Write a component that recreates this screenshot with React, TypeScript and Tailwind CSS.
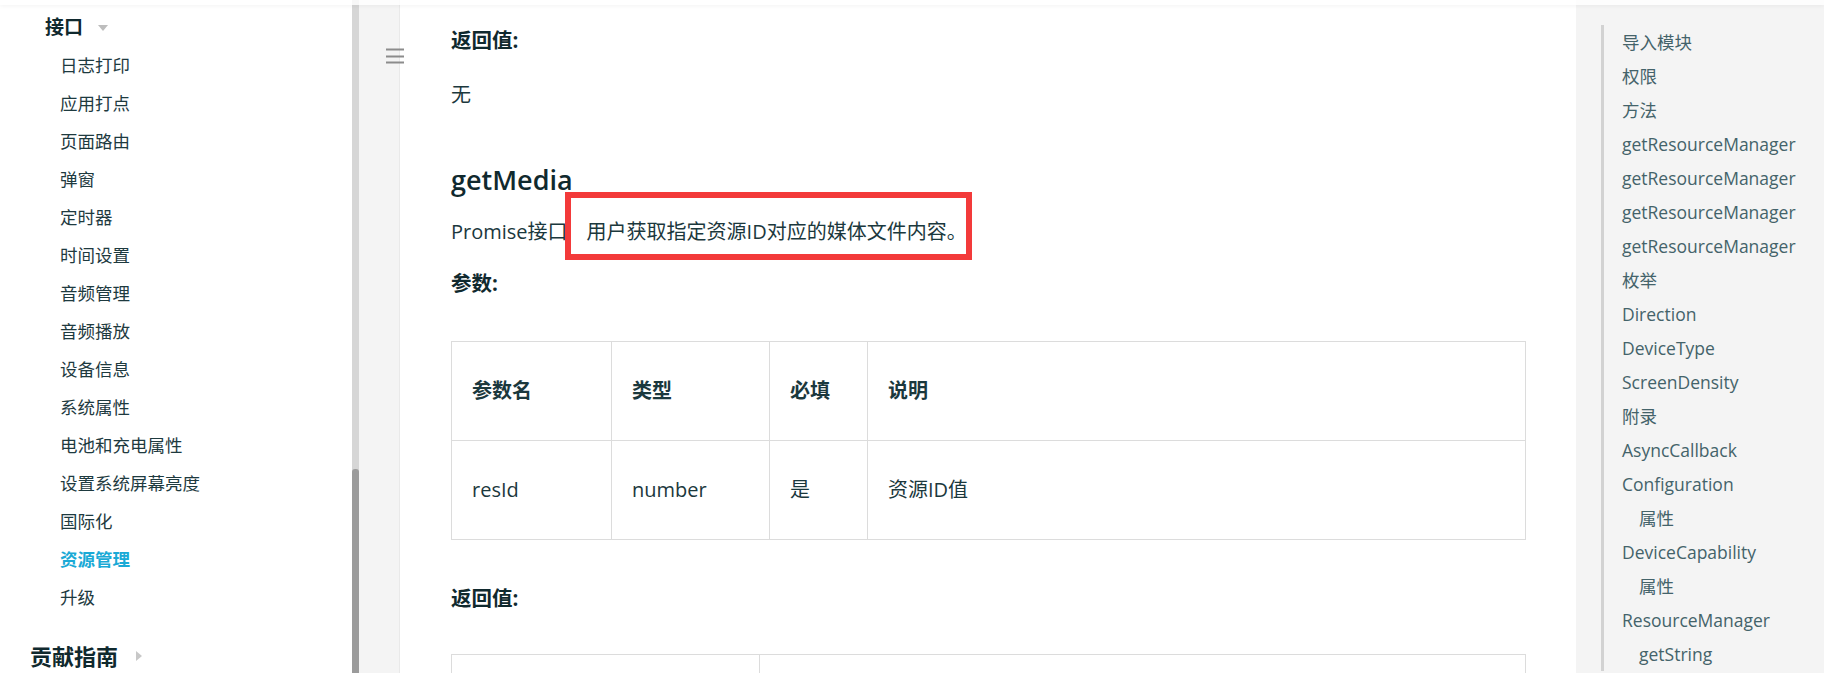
import React from 'react';

const FONT = '"Open Sans", "Noto Sans CJK SC", sans-serif';

const navItems = [
  '日志打印',
  '应用打点',
  '页面路由',
  '弹窗',
  '定时器',
  '时间设置',
  '音频管理',
  '音频播放',
  '设备信息',
  '系统属性',
  '电池和充电属性',
  '设置系统屏幕亮度',
  '国际化',
  '资源管理',
  '升级',
];

const tocItems: { label: string; indent?: boolean }[] = [
  { label: '导入模块' },
  { label: '权限' },
  { label: '方法' },
  { label: 'getResourceManager' },
  { label: 'getResourceManager' },
  { label: 'getResourceManager' },
  { label: 'getResourceManager' },
  { label: '枚举' },
  { label: 'Direction' },
  { label: 'DeviceType' },
  { label: 'ScreenDensity' },
  { label: '附录' },
  { label: 'AsyncCallback' },
  { label: 'Configuration' },
  { label: '属性', indent: true },
  { label: 'DeviceCapability' },
  { label: '属性', indent: true },
  { label: 'ResourceManager' },
  { label: 'getString', indent: true },
];

const Sidebar: React.FC = () => (
  <aside className="w-[352px] shrink-0 bg-white overflow-hidden text-[#1e3a3f]">
    <div className="mt-[8px] h-[38px] pl-[45px] flex items-center">
      <span className="text-[19px] font-bold text-[#10292e]">接口</span>
      <svg width="10" height="6" viewBox="0 0 10 6" className="ml-[15px] mt-[1px]">
        <polygon points="0,0 10,0 5,6" fill="#bdbdbd" />
      </svg>
    </div>
    <ul>
      {navItems.map((item) => (
        <li
          key={item}
          className={`h-[38px] pl-[60px] flex items-center text-[17.5px] ${
            item === '资源管理' ? 'font-bold text-[#1aaad6]' : ''
          }`}
        >
          {item}
        </li>
      ))}
    </ul>
    <div className="mt-[21px] h-[38px] pl-[30px] flex items-center">
      <span className="text-[22px] font-bold text-[#10292e]">贡献指南</span>
      <svg width="6" height="10" viewBox="0 0 6 10" className="ml-[18px]">
        <polygon points="0,0 6,5 0,10" fill="#c8c8c8" />
      </svg>
    </div>
  </aside>
);

const Scrollbar: React.FC = () => (
  <div className="w-[7px] shrink-0 bg-[#d6d6d6] flex flex-col">
    <div className="mt-[469px] flex-1 bg-[#9b9b9b] rounded-t-[3px]" />
  </div>
);

const Gutter: React.FC = () => (
  <div className="w-[41px] shrink-0 bg-[#f4f4f4] border-r border-[#e9e9e9]">
    <svg width="18" height="16" viewBox="0 0 18 16" className="relative z-10 ml-[27px] mt-[48px]">
      <rect x="0" y="0.5" width="18" height="2" fill="#8c8c8c" />
      <rect x="0" y="7.5" width="18" height="2" fill="#8c8c8c" />
      <rect x="0" y="13.5" width="18" height="2" fill="#8c8c8c" />
    </svg>
  </div>
);

const cell = 'border border-[#dcdcdc] pl-[20px] text-left align-middle';

const Content: React.FC = () => (
  <main className="flex-1 bg-white pl-[51px] pr-[50px] text-[20px] text-[#1b383d] overflow-hidden">
    <h4 className="mt-[20px] leading-[40px] text-[20.5px] font-bold text-[#10292e]">返回值:</h4>
    <p className="mt-[15px] leading-[40px]">无</p>
    <h3 className="mt-[45px] leading-[40px] text-[27px] font-semibold text-[#10292e]">getMedia</h3>
    <p className="relative mt-[12px] leading-[40px]">
      <span>Promise接口</span>
      <span className="ml-[19px]">用户获取指定资源ID对应的媒体文件内容。</span>
      {/* annotation box drawn over the sentence */}
      <span className="absolute left-[114px] top-[-20px] w-[407px] h-[68px] border-[6px] border-[#f33a3a]" />
    </p>
    <h4 className="mt-[11px] leading-[40px] text-[20.5px] font-bold text-[#10292e]">参数:</h4>
    <table className="mt-[38px] w-full border-collapse">
      <thead>
        <tr className="h-[99px]">
          <th className={`${cell} w-[160px] font-bold`}>参数名</th>
          <th className={`${cell} w-[158px] font-bold`}>类型</th>
          <th className={`${cell} w-[98px] font-bold`}>必填</th>
          <th className={`${cell} font-bold`}>说明</th>
        </tr>
      </thead>
      <tbody>
        <tr className="h-[99px]">
          <td className={cell}>resId</td>
          <td className={cell}>number</td>
          <td className={cell}>是</td>
          <td className={cell}>资源ID值</td>
        </tr>
      </tbody>
    </table>
    <h4 className="mt-[38px] leading-[40px] text-[20.5px] font-bold text-[#10292e]">返回值:</h4>
    <table className="mt-[36px] w-full border-collapse">
      <tbody>
        <tr className="h-[99px]">
          <td className={`${cell} w-[308px]`} />
          <td className={cell} />
        </tr>
      </tbody>
    </table>
  </main>
);

const Toc: React.FC = () => (
  <aside className="w-[248px] shrink-0 bg-[#f4f4f4] pt-[25px] pl-[25px] overflow-hidden">
    <ul className="border-l-[3px] border-[#d2d2d2] pl-[18px] text-[17.5px] text-[#44636a]">
      {tocItems.map((item, i) => (
        <li
          key={i}
          className={`h-[34px] flex items-center whitespace-nowrap ${item.indent ? 'pl-[17px]' : ''}`}
        >
          {item.label}
        </li>
      ))}
    </ul>
  </aside>
);

export default function App() {
  return (
    <div className="relative w-[1824px] h-[673px] overflow-hidden flex bg-white" style={{ fontFamily: FONT }}>
      <Sidebar />
      <Scrollbar />
      <Gutter />
      <Content />
      <Toc />
      {/* shadow of the fixed header above */}
      <div className="absolute top-0 left-0 right-0 h-[5px] bg-white/80 shadow-[0_1px_4px_rgba(0,0,0,0.05)] z-20" />
    </div>
  );
}
